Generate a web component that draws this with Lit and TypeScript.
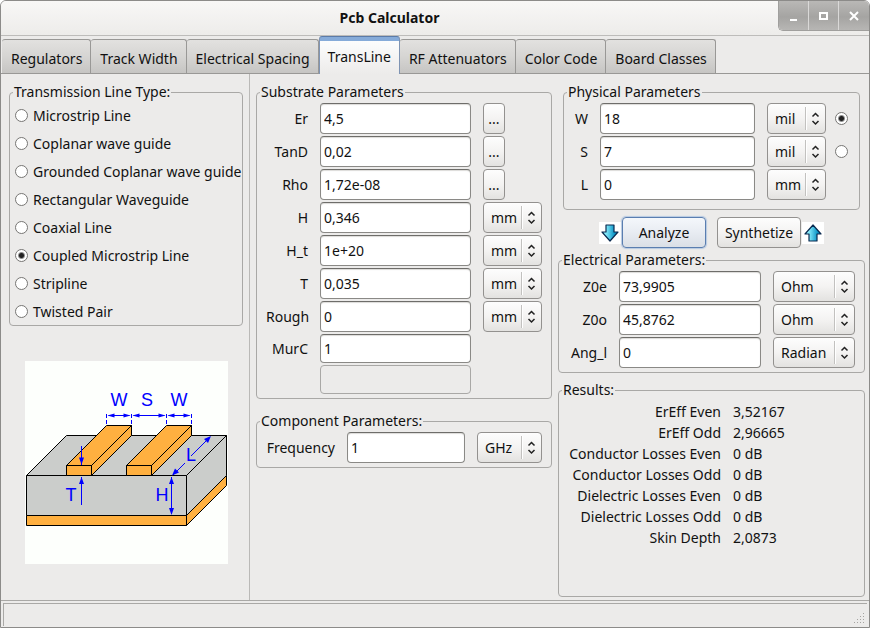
import { LitElement, html, css, svg } from "lit";
import { customElement, property } from "lit/decorators.js";

const shared = css`
  * { box-sizing: border-box; }
  fieldset {
    margin: 0;
    min-width: 0;
    padding: 0 9px;
    border: 1px solid #a9a8a6;
    border-radius: 4px;
  }
  legend {
    height: 21px;
    line-height: 20px;
    padding: 0 1px;
    margin-left: -6px;
    white-space: nowrap;
  }
  input, button, select { font: inherit; color: inherit; margin: 0; }
  input[type="text"] {
    min-width: 0;
    width: 100%;
    height: 31px;
    padding: 0 3px;
    background: #fff;
    border: 1px solid #8a8986;
    border-top-color: #6e6d6a;
    border-radius: 4px;
    box-shadow: inset 0 1px 1px #dcdbd9;
    outline: none;
  }
  input[type="text"].short { height: 29px; }
  input[type="text"]:disabled {
    background: #ecebea;
    border-color: #a9a8a6;
    box-shadow: none;
  }
  input[type="radio"] {
    appearance: none;
    flex: none;
    width: 13px;
    height: 13px;
    background: #fff;
    border: 1px solid #777674;
    border-radius: 50%;
  }
  input[type="radio"]:checked {
    background: radial-gradient(circle, #222 0 2px, #fff 4px);
  }
  button {
    height: 31px;
    padding: 0;
    background: linear-gradient(#fdfdfd, #f4f3f2 50%, #e3e2e0);
    border: 1px solid #93918f;
    border-radius: 4px;
    white-space: nowrap;
  }
`;

@customElement("unit-select")
class UnitSelect extends LitElement {
  @property() value = "";
  @property() label = "";
  static styles = [shared, css`
    :host { display: grid; height: 31px; }
    select {
      grid-area: 1 / 1;
      appearance: none;
      width: 100%;
      height: 31px;
      padding: 0 7px;
      background: linear-gradient(#fdfdfd, #f4f3f2 50%, #e3e2e0);
      border: 1px solid #93918f;
      border-radius: 4px;
    }
    svg {
      grid-area: 1 / 1;
      justify-self: end;
      pointer-events: none;
    }
  `];
  render() {
    return html`
      <select aria-label=${this.label}><option>${this.value}</option></select>
      <svg width="21" height="31" viewBox="0 0 21 31" fill="none">
        <path d="M.5 4V27" stroke="#c2c1bf" />
        <path d="M1.500 4V27" stroke="#fff" />
        <path d="M7.500 13.500l3-3 3 3M7.500 18l3 3 3-3" stroke="#222" stroke-width="1.500" />
      </svg>
    `;
  }
}

const arrow = (d: string) => html`
  <svg class="arrow" width="22" height="22" viewBox="0 0 22 22" aria-hidden="true">
    <defs>
      <linearGradient id="g" x1="0" x2="1">
        <stop offset="0.2" stop-color="#8ff2ff" />
        <stop offset="0.8" stop-color="#0891c4" />
      </linearGradient>
    </defs>
    <rect width="22" height="22" fill="#fff" />
    <path d=${d} fill="url(#g)" stroke="#0a2a50" stroke-width="1.200" stroke-linejoin="round" />
  </svg>
`;

const tabs = ["Regulators", "Track Width", "Electrical Spacing", "TransLine", "RF Attenuators", "Color Code", "Board Classes"];
const lineTypes = [
  "Microstrip Line", "Coplanar wave guide", "Grounded Coplanar wave guide", "Rectangular Waveguide",
  "Coaxial Line", "Coupled Microstrip Line", "Stripline", "Twisted Pair",
];
type Row = { name: string; value: string; unit?: string; more?: boolean; pick?: boolean };
const substrate: Row[] = [
  { name: "Er", value: "4,5", more: true },
  { name: "TanD", value: "0,02", more: true },
  { name: "Rho", value: "1,72e-08", more: true },
  { name: "H", value: "0,346", unit: "mm" },
  { name: "H_t", value: "1e+20", unit: "mm" },
  { name: "T", value: "0,035", unit: "mm" },
  { name: "Rough", value: "0", unit: "mm" },
];
const physical: Row[] = [
  { name: "W", value: "18", unit: "mil", pick: true },
  { name: "S", value: "7", unit: "mil", pick: false },
  { name: "L", value: "0", unit: "mm" },
];
const electrical: Row[] = [
  { name: "Z0e", value: "73,9905", unit: "Ohm" },
  { name: "Z0o", value: "45,8762", unit: "Ohm" },
  { name: "Ang_l", value: "0", unit: "Radian" },
];
const results = [
  ["ErEff Even", "3,52167"],
  ["ErEff Odd", "2,96665"],
  ["Conductor Losses Even", "0 dB"],
  ["Conductor Losses Odd", "0 dB"],
  ["Dielectric Losses Even", "0 dB"],
  ["Dielectric Losses Odd", "0 dB"],
  ["Skin Depth", "2,0873"],
];

const strip = (x: number) => svg`
  <path d="M${x} 104.500l40-40h25l-40 40z M${x} 104.500h25v10h-25z M${x + 25} 104.500l40-40v10l-40 40z"
    fill="#ffb040" stroke="#000" />
`;
const span = (a: number, b: number) => svg`
  <path d="M${a} 53v12M${b} 53v12" stroke="#00f" stroke-dasharray="4 2" />
  <path d="M${a + 2} 54.500H${b - 2}" stroke="#00f" />
  <path d="M${a + 1} 54.500l7-2v4zM${b - 1} 54.500l-7-2v4z" fill="#00f" />
`;

@customElement("app-root")
class AppRoot extends LitElement {
  static styles = [shared, css`
    :host {
      display: flex;
      flex-direction: column;
      box-sizing: border-box;
      min-height: 100vh;
      background: #ecebea;
      color: #111;
      border: 1px solid #8c8b89;
      border-radius: 6px 6px 0 0;
      overflow: hidden;
      font: 14px/21px "Noto Sans", "Open Sans", sans-serif;
    }
    .title {
      display: grid;
      grid-template-columns: 1fr 91px;
      height: 35px;
      background: linear-gradient(#f8f7f6, #edecea);
      border-bottom: 1px solid #bdbcba;
    }
    h1 {
      margin: 0;
      font-size: 14px;
      line-height: 34px;
      text-align: center;
    }
    .controls {
      display: grid;
      grid-template-columns: repeat(3, 1fr);
      height: 30px;
      border-radius: 0 0 0 5px;
      overflow: hidden;
      border-left: 1px solid #a09f9d;
      border-bottom: 1px solid #a09f9d;
    }
    .controls button {
      height: 29px;
      border: 0;
      border-right: 1px solid #dad9d8;
      border-radius: 0;
      background: linear-gradient(#b9b8b6, #a5a4a2 55%, #b7b6b4);
    }
    .controls button:last-child { border-right: 0; }
    .controls svg { display: block; margin: auto; }
    nav {
      display: flex;
      align-items: flex-end;
      height: 38px;
      padding-left: 1px;
      border-bottom: 1px solid #999896;
    }
    nav button {
      height: 34px;
      padding: 3px 8px 0 9px;
      border-color: #999896;
      border-width: 1px 1px 0 0;
      border-radius: 3px 3px 0 0;
      background: linear-gradient(#e2e1df, #d6d5d3 50%, #c6c5c3);
    }
    nav .on {
      height: 38px;
      margin-bottom: -1px;
      padding: 1px 8px 0;
      background: linear-gradient(#86abd9 0 4px, #fdfdfd 4px, #ecebea);
      border-color: #5b7ba8 #7f94b3;
      border-left-width: 1px;
    }
    main {
      flex: 1;
      display: grid;
      grid-template-columns: 249fr 306fr 313fr;
      border-bottom: 1px solid #a9a8a6;
    }
    .col {
      display: flex;
      flex-direction: column;
      min-width: 0;
      padding: 8px 4px 3px 6px;
    }
    .col.types { border-right: 1px solid #bab9b7; padding: 8px 6px 0 8px; }
    .col.right { padding-left: 2px; }
    .list { display: grid; gap: 2px; }
    .types fieldset { padding: 0 0 0 5px; }
    .types legend { margin-left: -2px; }
    .types label {
      display: flex;
      align-items: center;
      gap: 5px;
      height: 26px;
      padding-bottom: 2px;
      white-space: nowrap;
    }
    .drawing { display: block; margin: 35px auto 0; }
    .row {
      display: grid;
      grid-template-columns: 42px minmax(0, 1fr) 59px;
      column-gap: 12px;
      align-items: center;
      margin-bottom: 2px;
    }
    .row label { text-align: right; white-space: nowrap; }
    .more { width: 22px; }
    .substrate { padding-bottom: 2px; }
    .component { margin-top: 12px; padding-bottom: 2px; }
    .component .row { grid-template-columns: 69px minmax(0, 1fr) 65px; }
    .physical { margin: 0 5px; padding-bottom: 7px; }
    .physical .row { grid-template-columns: 15px minmax(0, 1fr) 59px 12px; }
    .physical input[type="radio"] { margin-left: -3px; }
    .electrical { padding-bottom: 2px; }
    .electrical .row { grid-template-columns: 39px minmax(0, 1fr) 82px; }
    .actions {
      display: flex;
      align-items: center;
      justify-content: center;
      height: 31px;
      margin: 7px 0 2px;
      gap: 1px;
    }
    .actions button { width: 84px; }
    .actions .primary {
      margin-right: 10px;
      border-color: #5a7eb0;
      box-shadow: 0 0 1px 1px #b6c9e2;
      background: linear-gradient(#f4f7fb, #e8ecf2 50%, #dadfe6);
    }
    .results { flex: 1; margin-top: 7px; }
    table { border-collapse: collapse; }
    th { width: 153px; padding: 0; text-align: right; font-weight: normal; white-space: nowrap; }
    td { padding: 0 0 0 12px; white-space: nowrap; }
    footer {
      display: flex;
      align-items: flex-end;
      justify-content: flex-end;
      height: 23px;
      margin: 2px 2px 1px;
      border: 1px solid #a9a8a6;
      border-width: 1px 0 0 1px;
    }
  `];

  row(r: Row) {
    return html`
      <div class="row">
        <label for=${r.name}>${r.name}</label>
        <input type="text" id=${r.name} .value=${r.value} />
        ${r.more ? html`<button class="more" aria-label="${r.name} values">...</button>` : ""}
        ${r.unit ? html`<unit-select .value=${r.unit} .label="${r.name} unit"></unit-select>` : ""}
        ${r.pick === undefined ? "" : html`<input type="radio" name="solve" aria-label=${r.name} .checked=${r.pick} />`}
      </div>
    `;
  }

  drawing() {
    return html`
      <svg class="drawing" width="203" height="203" viewBox="0 0 203 203" role="img" aria-label="Coupled microstrip line">
        <rect width="203" height="203" fill="#fdfffc" />
        <g stroke="#000" stroke-linejoin="round">
          <path d="M1.500 114.500l40-40h160l-40 40z" fill="#cbcdcb" />
          <path d="M161.500 114.500l40-40v40l-40 40z" fill="#cbcdcb" />
          <path d="M1.500 114.500h160v40h-160z" fill="#cbcdcb" />
          <path d="M1.500 154.500h160v10h-160z M161.500 154.500l40-40v10l-40 40z" fill="#ffb040" />
          ${strip(41.5)}${strip(101.5)}
        </g>
        ${span(81.5, 106.5)}${span(106.5, 141.5)}${span(141.5, 166.5)}
        <g stroke="#00f" fill="none">
          <path d="M56.500 85V104M56.500 116V144M146.500 116V153M148 114L160 102M166 95L185 76" />
        </g>
        <g fill="#00f">
          <path d="M56.500 103.500l-2.500-7h5zM56.500 116l-2.500 7h5zM146.500 116l-2.500 7h5zM146.500 154l-2.500-7h5zM147 114.500l3-7 4 4zM186 75l-7 3 4 4z" />
        </g>
        <g fill="#00f" font-family="Liberation Sans, sans-serif" font-size="18" text-anchor="middle">
          <text x="94" y="45">W</text><text x="122" y="45">S</text><text x="154" y="45">W</text>
          <text x="166" y="100">L</text><text x="46" y="140">T</text><text x="137" y="140">H</text>
        </g>
      </svg>
    `;
  }

  render() {
    return html`
      <header class="title">
        <h1>Pcb Calculator</h1>
        <div class="controls">
          <button aria-label="Minimize"><svg width="12" height="12"><path d="M2 10h7" stroke="#fff" stroke-width="2" /></svg></button>
          <button aria-label="Maximize"><svg width="12" height="12"><path d="M2 3h7v6h-7z" fill="none" stroke="#fff" stroke-width="2" /></svg></button>
          <button aria-label="Close"><svg width="12" height="12"><path d="M2 2l8 8M10 2l-8 8" stroke="#fff" stroke-width="2" /></svg></button>
        </div>
      </header>
      <nav>${tabs.map((t) => html`<button class=${t === "TransLine" ? "on" : ""}>${t}</button>`)}</nav>
      <main>
        <section class="col types">
          <fieldset>
            <legend>Transmission Line Type:</legend>
            <div class="list">
              ${lineTypes.map((t) => html`
                <label><input type="radio" name="line" .checked=${t === "Coupled Microstrip Line"} />${t}</label>
              `)}
            </div>
          </fieldset>
          ${this.drawing()}
        </section>
        <section class="col">
          <fieldset class="substrate">
            <legend>Substrate Parameters</legend>
            ${substrate.map((r) => this.row(r))}
            <div class="row"><label for="MurC">MurC</label><input class="short" type="text" id="MurC" .value=${"1"} /></div>
            <div class="row"><span></span><input class="short" type="text" aria-label="Unused" disabled /></div>
          </fieldset>
          <fieldset class="component">
            <legend>Component Parameters:</legend>
            ${this.row({ name: "Frequency", value: "1", unit: "GHz" })}
          </fieldset>
        </section>
        <section class="col right">
          <fieldset class="physical">
            <legend>Physical Parameters</legend>
            ${physical.map((r) => this.row(r))}
          </fieldset>
          <div class="actions">
            ${arrow("M7 3h8v7h4l-8 9-8-9h4z")}
            <button class="primary">Analyze</button>
            <button>Synthetize</button>
            ${arrow("M7 19h8v-7h4l-8-9-8 9h4z")}
          </div>
          <fieldset class="electrical">
            <legend>Electrical Parameters:</legend>
            ${electrical.map((r) => this.row(r))}
          </fieldset>
          <fieldset class="results">
            <legend>Results:</legend>
            <table>${results.map(([k, v]) => html`<tr><th scope="row">${k}</th><td>${v}</td></tr>`)}</table>
          </fieldset>
        </section>
      </main>
      <footer>
        <svg width="14" height="14" fill="#a5a4a2" aria-hidden="true">
          <path d="M10 1h1v1h-1zM7 4h1v1h-1zM10 4h1v1h-1zM4 7h1v1h-1zM7 7h1v1h-1zM10 7h1v1h-1zM1 10h1v1h-1zM4 10h1v1h-1zM7 10h1v1h-1zM10 10h1v1h-1z" />
        </svg>
      </footer>
    `;
  }
}
